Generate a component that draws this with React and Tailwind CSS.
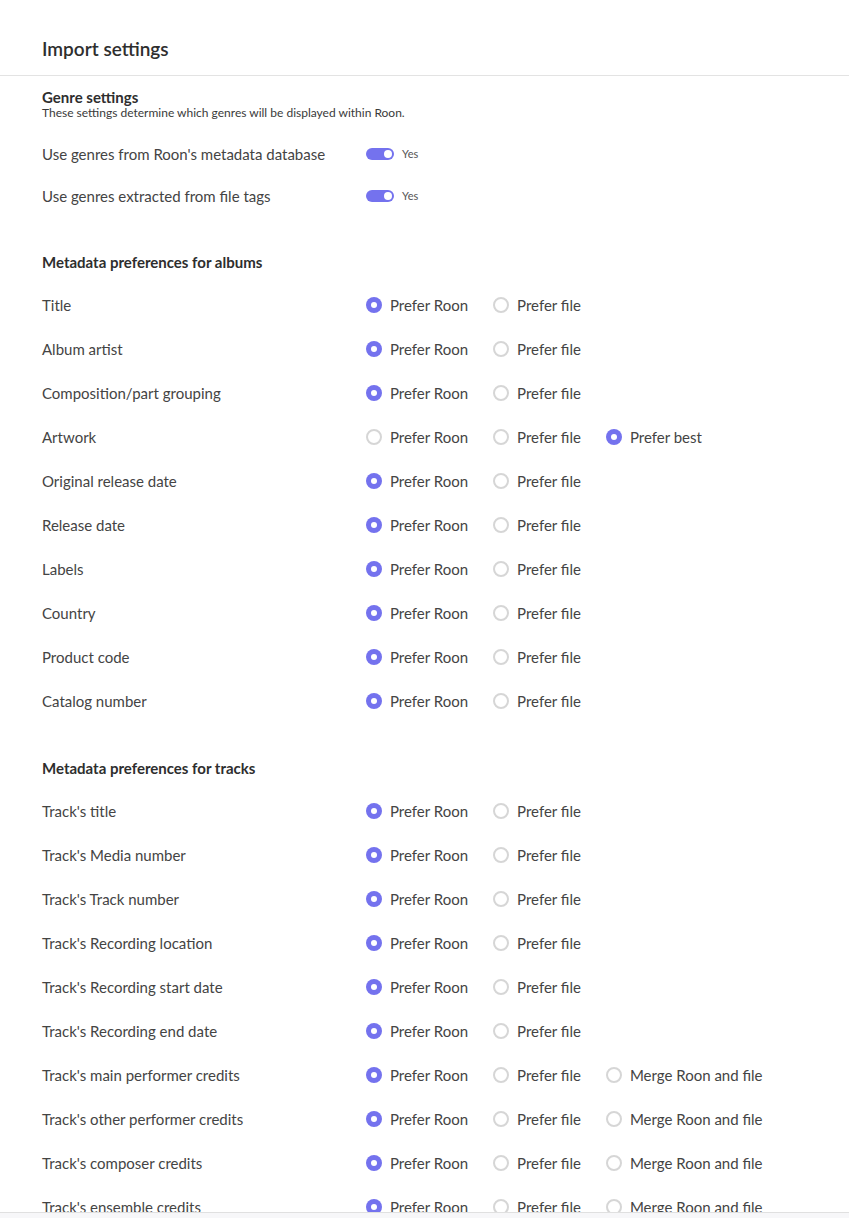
import React from "react";

const font = { fontFamily: "Lato, 'Open Sans', sans-serif" };

function Radio({ checked, label }) {
  return (
    <div className="flex items-center gap-2 mr-[25px]">
      {checked ? (
        <span className="w-4 h-4 rounded-full bg-[#7472ee] flex items-center justify-center">
          <span className="w-[6px] h-[6px] rounded-full bg-white" />
        </span>
      ) : (
        <span className="w-4 h-4 rounded-full border-2 border-[#d6d6d6] bg-white" />
      )}
      <span className="text-[15px] text-[#444444]">{label}</span>
    </div>
  );
}

function Toggle() {
  return (
    <div className="flex items-center gap-2">
      <span className="w-[28px] h-[12px] rounded-full bg-[#7472ee] flex items-center justify-end pr-[2px]">
        <span className="w-[8px] h-[8px] rounded-full bg-white" />
      </span>
      <span className="text-[11px] text-[#555]">Yes</span>
    </div>
  );
}

function Row({ label, options, sel, h = "h-[44px]", children }) {
  return (
    <div className={`flex items-center ${h}`}>
      <div className="w-[324px] text-[15px] text-[#444444]">{label}</div>
      <div className="flex items-center">
        {children ||
          options.map((o, i) => <Radio key={o} label={o} checked={i === sel} />)}
      </div>
    </div>
  );
}

const two = ["Prefer Roon", "Prefer file"];
const three = ["Prefer Roon", "Prefer file", "Merge Roon and file"];

const albums = [
  ["Title", two, 0],
  ["Album artist", two, 0],
  ["Composition/part grouping", two, 0],
  ["Artwork", ["Prefer Roon", "Prefer file", "Prefer best"], 2],
  ["Original release date", two, 0],
  ["Release date", two, 0],
  ["Labels", two, 0],
  ["Country", two, 0],
  ["Product code", two, 0],
  ["Catalog number", two, 0],
];

const tracks = [
  ["Track's title", two, 0],
  ["Track's Media number", two, 0],
  ["Track's Track number", two, 0],
  ["Track's Recording location", two, 0],
  ["Track's Recording start date", two, 0],
  ["Track's Recording end date", two, 0],
  ["Track's main performer credits", three, 0],
  ["Track's other performer credits", three, 0],
  ["Track's composer credits", three, 0],
  ["Track's ensemble credits", three, 0],
  ["Track's conductor credits", three, 0],
];

export default function App() {
  return (
    <div className="h-[1218px] w-[849px] bg-white flex flex-col overflow-hidden" style={font}>
      <div className="flex-1 overflow-hidden">
        <div className="h-[76px] border-b border-[#e3e3e3] px-[42px] pt-[38px]">
          <div className="text-[19px] leading-[22px] font-semibold text-[#2e2e2e]">Import settings</div>
        </div>
        <div className="px-[42px] pt-[12px]">
          <div className="text-[15px] leading-[18px] font-bold text-[#2e2e2e]">Genre settings</div>
          <div className="text-[12px] leading-[14px] text-[#3a3a3a]">
            These settings determine which genres will be displayed within Roon.
          </div>
          <div className="mt-[13px]">
            <Row label="Use genres from Roon's metadata database" h="h-[42px]">
              <Toggle />
            </Row>
            <Row label="Use genres extracted from file tags" h="h-[42px]">
              <Toggle />
            </Row>
          </div>
          <div className="mt-[35px] text-[15px] leading-[20px] font-bold text-[#2e2e2e]">
            Metadata preferences for albums
          </div>
          <div className="mt-[11px]">
            {albums.map(([l, o, s]) => (
              <Row key={l} label={l} options={o} sel={s} />
            ))}
          </div>
          <div className="mt-[35px] text-[15px] leading-[20px] font-bold text-[#2e2e2e]">
            Metadata preferences for tracks
          </div>
          <div className="mt-[11px]">
            {tracks.map(([l, o, s]) => (
              <Row key={l} label={l} options={o} sel={s} />
            ))}
          </div>
        </div>
      </div>
      <div className="h-[6px] border-t border-[#e0e0e0] bg-[#f7f7f9] shrink-0" />
    </div>
  );
}
